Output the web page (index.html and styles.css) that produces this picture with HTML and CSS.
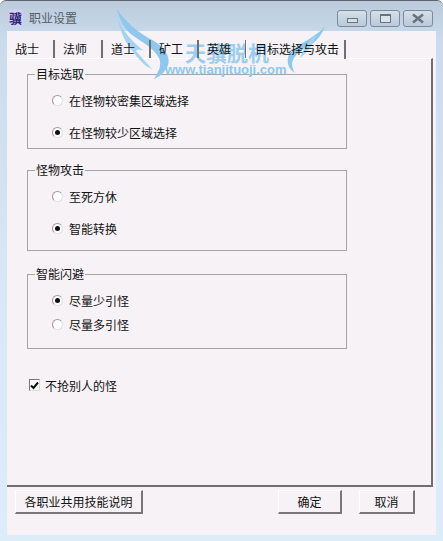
FILE: index.html
```html
<!DOCTYPE html>
<html lang="zh-CN">
<head>
  <meta charset="UTF-8" />
  <title>职业设置</title>
  <link rel="stylesheet" href="styles.css">
</head>
<body>

  <div class="window">
    <div class="titlebar">
      <div class="app-icon">骥</div>
      <div class="title">职业设置</div>
      <div class="win-buttons">
        <div class="win-btn"><span class="glyph-min"></span></div>
        <div class="win-btn"><span class="glyph-max"></span></div>
        <div class="win-btn">
          <svg width="14" height="11" viewBox="0 0 14 11"><path d="M2 1.5L12 9.5M12 1.5L2 9.5" stroke="#69727d" stroke-width="2.6" fill="none"/></svg>
        </div>
      </div>
    </div>

    <div class="client">
      <div class="tabs">
        <div class="tab">战士</div>
        <div class="tab">法师</div>
        <div class="tab">道士</div>
        <div class="tab">矿工</div>
        <div class="tab">英雄</div>
        <div class="tab active">目标选择与攻击</div>
      </div>

      <div class="panel">
        <fieldset class="group group-target">
          <legend>目标选取</legend>
          <label class="radio"><span class="dot"></span>在怪物较密集区域选择</label>
          <label class="radio"><span class="dot on"></span>在怪物较少区域选择</label>
        </fieldset>

        <fieldset class="group group-attack">
          <legend>怪物攻击</legend>
          <label class="radio"><span class="dot"></span>至死方休</label>
          <label class="radio"><span class="dot on"></span>智能转换</label>
        </fieldset>

        <fieldset class="group group-dodge">
          <legend>智能闪避</legend>
          <label class="radio"><span class="dot on"></span>尽量少引怪</label>
          <label class="radio"><span class="dot"></span>尽量多引怪</label>
        </fieldset>

        <label class="check">
          <span class="box">
            <svg width="9" height="9" viewBox="0 0 9 9"><path d="M1 4.5L3.5 7L8 1.5" stroke="#111" stroke-width="2" fill="none"/></svg>
          </span>
          不抢别人的怪
        </label>
      </div>

      <div class="footer">
        <button class="btn btn-help">各职业共用技能说明</button>
        <button class="btn btn-ok">确定</button>
        <button class="btn btn-cancel">取消</button>
      </div>
    </div>

    <!-- watermark -->
    <div class="watermark">
      <svg width="225" height="85" viewBox="0 0 225 85">
        <path d="M7 8C14 20 30 33 44 40C54 46 61 56 58 64C56 70 51 75 44 78C49 70 52 64 49 57C44 47 32 41 22 34C14 28 9 18 7 8Z" fill="#8fc8ee"/>
        <path d="M7 14C11 30 24 42 34 50C29 48 27 49 26 50C31 56 37 62 42 68C36 66 30 60 24 52C15 42 9 28 7 14Z" fill="#a5d3f1"/>
        <path d="M215 25C212 35 204 43 194 48C187 52 183 57 182 62C182 66 183 69 185 72C178 68 176 60 179 54C184 45 194 42 202 36C207 33 212 29 215 25Z" fill="#8fc8ee"/>
        <path d="M206 33C204 42 198 51 190 57C193 49 199 40 206 33Z" fill="#a5d3f1"/>
      </svg>
      <div class="wm-name">天骥脱机</div>
      <div class="wm-url">www.tianjituoji.com</div>
    </div>
  </div>

</body>
</html>
```

FILE: styles.css
```css
* {
  box-sizing: border-box;
}

body {
  margin: 0;
  width: 443px;
  height: 541px;
  overflow: hidden;
  font-family: "Noto Sans CJK SC", "Liberation Sans", sans-serif;
  font-size: 12px;
  color: #111;
  background-color: #fff;
}

.window {
  position: relative;
  width: 443px;
  height: 541px;
  display: flex;
  flex-direction: column;
  background: linear-gradient(#bccbdc 0, #c9dcee 40px, #d8e9f6 300px, #dcecf9 100%);
  border-top: 1px solid #5b6470;
  border-radius: 6px 6px 0 0;
}

.titlebar {
  height: 30px;
  display: flex;
  align-items: center;
  padding: 2px 10px 0 9px;
}

.app-icon {
  width: 14px;
  height: 15px;
  margin-right: 6px;
  font-size: 13px;
  line-height: 15px;
  font-weight: bold;
  color: #2b1f7a;
  background-color: #d9cfee;
}

.title {
  color: #555c66;
  flex: 1;
}

.win-buttons {
  display: flex;
  gap: 3px;
  margin-top: 3px;
}

.win-btn {
  width: 30px;
  height: 17px;
  display: flex;
  align-items: center;
  justify-content: center;
  border: 1px solid #7d8a9a;
  border-radius: 3px;
  background: linear-gradient(#d5e0ea, #b9c9d9);
}

.glyph-min {
  width: 11px;
  height: 5px;
  margin-top: 3px;
  background-color: #d8dee5;
  border: 1px solid #69727d;
}

.glyph-max {
  width: 11px;
  height: 9px;
  border: 1px solid #69727d;
  border-top-width: 2px;
  background-color: #dde3ea;
}

.client {
  flex: 1;
  margin: 0 7px 6px;
  display: flex;
  flex-direction: column;
  background-color: #f6f2f6;
}

.tabs {
  position: relative;
  z-index: 2;
  height: 27px;
  display: flex;
  padding-top: 9px;
}

.tab {
  width: 48px;
  height: 18px;
  line-height: 17px;
  padding-left: 8px;
  border-right: 2px solid #6f6f6f;
}

.tab.active {
  width: 100px;
  height: 19px;
  margin-left: -1px;
  padding-left: 8px;
  border-left: 1px solid #fff;
}

.panel {
  height: 429px;
  padding: 16px 0 0 20px;
  display: flex;
  flex-direction: column;
  border-top: 1px solid #fff;
  border-right: 2px solid #6f6f6f;
  border-bottom: 2px solid #6f6f6f;
  margin-right: 3px;
}

.group {
  width: 320px;
  margin: 0;
  padding: 0 0 0 24px;
  border: 1px solid #a5a5a5;
  display: flex;
  flex-direction: column;
}

.group legend {
  padding: 0 1px;
  margin-left: -17px;
  line-height: 14px;
}

.group-target {
  height: 82px;
  padding-top: 9px;
  gap: 12px;
  margin-top: -8px;
  margin-bottom: 14px;
}

.group-attack {
  height: 88px;
  padding-top: 9px;
  gap: 12px;
  margin-bottom: 16px;
}

.group-dodge {
  height: 82px;
  padding-top: 9px;
  gap: 4px;
  margin-bottom: 28px;
}

.radio {
  height: 20px;
  display: flex;
  align-items: center;
  gap: 6px;
}

.dot {
  width: 11px;
  height: 11px;
  border-radius: 50%;
  background-color: #fff;
  border: 1px solid #9a9a9a;
  border-right-color: #e2e2e2;
  border-bottom-color: #e2e2e2;
  display: flex;
  align-items: center;
  justify-content: center;
}

.dot.on::after {
  content: "";
  width: 5px;
  height: 5px;
  border-radius: 50%;
  background-color: #111;
}

.check {
  height: 16px;
  margin-left: 2px;
  display: flex;
  align-items: center;
  gap: 5px;
}

.box {
  width: 11px;
  height: 12px;
  display: flex;
  align-items: center;
  justify-content: center;
  background-color: #fff;
  border: 1px solid #777;
  border-right-color: #ddd;
  border-bottom-color: #ddd;
}

.footer {
  display: flex;
  padding: 3px 0 0 8px;
}

.btn {
  height: 24px;
  padding: 0;
  font-family: inherit;
  font-size: 12px;
  color: #111;
  background-color: #f6f2f6;
  border: 1px solid #fff;
  border-right: 2px solid #777;
  border-bottom: 2px solid #777;
}

.btn-help {
  width: 128px;
  margin-right: 135px;
}

.btn-ok {
  width: 64px;
  margin-right: 17px;
}

.btn-cancel {
  width: 56px;
}

.watermark {
  position: absolute;
  z-index: 1;
  left: 110px;
  top: 0;
  width: 225px;
  height: 85px;
  pointer-events: none;
}

.watermark svg {
  display: block;
}

.wm-name {
  position: absolute;
  left: 75px;
  top: 39px;
  font-size: 21px;
  line-height: 24px;
  font-weight: bold;
  color: #9ccdef;
  white-space: nowrap;
}

.wm-url {
  position: absolute;
  left: 55px;
  top: 61px;
  font-family: "Liberation Sans", sans-serif;
  font-size: 13px;
  line-height: 15px;
  font-weight: bold;
  color: #8fc8ee;
  white-space: nowrap;
}
```
